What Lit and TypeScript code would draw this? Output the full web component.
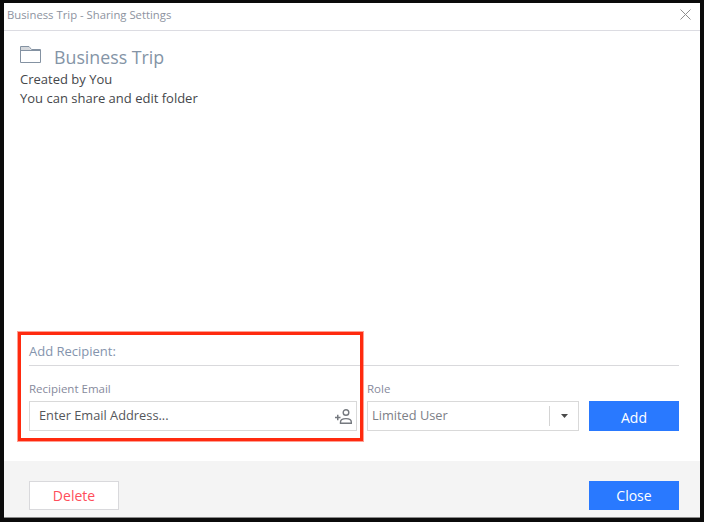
import { LitElement, html, css } from "lit";
import { customElement } from "lit/decorators.js";

@customElement("app-root")
export class AppRoot extends LitElement {
  static styles = css`
    :host {
      display: block;
      position: relative;
      width: 704px;
      height: 522px;
      box-sizing: border-box;
      background: #0b0b0b;
      padding: 3px 4px 4px 4px;
      font-family: "Open Sans", "Noto Sans", sans-serif;
      color: #4d4f53;
    }
    .win {
      height: 100%;
      display: flex;
      flex-direction: column;
      background: #fff;
      border-bottom: 1px solid #8a8a8a;
      box-sizing: border-box;
    }
    .titlebar {
      height: 28px;
      flex: none;
      box-sizing: border-box;
      border-bottom: 1px solid #dcdce2;
      display: flex;
      align-items: center;
      justify-content: space-between;
      padding: 0 9px 5px 3px;
      font-size: 11.3px;
      color: #8d93a0;
    }
    .close { display: block; }
    .body {
      flex: 1;
      display: flex;
      flex-direction: column;
      padding: 12px 21px 30px 16px;
      min-height: 0;
    }
    .head {
      display: flex;
      align-items: center;
      gap: 13px;
      height: 27px;
      font-size: 17.8px;
      color: #8494a6;
    }
    .head svg { margin-bottom: 4px; }
    .info { font-size: 13px; line-height: 19px; color: #45474b; }
    .spacer { flex: 1; }
    .section {
      margin-left: 9px;
      height: 30px;
      box-sizing: border-box;
      padding-top: 1px;
      border-bottom: 1px solid #d9d9dc;
      font-size: 13px;
      color: #8494ad;
      line-height: 28px;
    }
    .row {
      margin-left: 9px;
      margin-top: 15px;
      display: flex;
      align-items: flex-end;
    }
    .field label {
      display: block;
      font-size: 11.5px;
      color: #878a9c;
      line-height: 16px;
      margin-bottom: 4px;
    }
    .role-label { margin-left: 10px; }
    .box {
      box-sizing: border-box;
      height: 30px;
      border: 1px solid #d9d9d9;
      display: flex;
      align-items: center;
      font-size: 12.8px;
    }
    .text { padding-bottom: 2px; }
    .email { width: 328px; padding: 0 4px 0 9px; justify-content: space-between; color: #55575b; }
    .role { width: 212px; margin-left: 10px; padding-left: 4px; color: #7d8087; }
    .role .text { flex: 1; }
    .caret {
      width: 28px;
      height: 20px;
      border-left: 1px solid #d4d4d4;
      display: flex;
      align-items: center;
      justify-content: center;
    }
    .btn {
      box-sizing: border-box;
      width: 90px;
      height: 30px;
      display: flex;
      align-items: center;
      justify-content: center;
      font-size: 14px;
      background: #2979ff;
      color: #fff;
    }
    .add { margin-left: 10px; padding-top: 2px; }
    .footer {
      flex: none;
      height: 56px;
      box-sizing: border-box;
      background: #f4f4f4;
      display: flex;
      justify-content: space-between;
      padding: 20px 21px 0 25px;
    }
    .footer .btn { height: 29px; }
    .delete { background: #fff; border: 1px solid #d9d9dc; color: #ff4d5a; }
    .annot {
      position: absolute;
      left: 18px;
      top: 332px;
      width: 345px;
      height: 109px;
      box-sizing: border-box;
      border: 3px solid #ff2a0f;
      box-shadow: 0 0 0 1px rgba(255, 42, 15, 0.45);
      pointer-events: none;
    }
  `;

  render() {
    return html`
      <div class="win">
        <div class="titlebar">
          <span>Business Trip - Sharing Settings</span>
          <svg class="close" width="11" height="11" viewBox="0 0 11 11">
            <path d="M.5.5l10 10M10.500.5l-10 10" stroke="#8f8f8f" stroke-width="1" fill="none" />
          </svg>
        </div>
        <div class="body">
          <div class="head">
            <svg width="21" height="17" viewBox="0 0 21 17">
              <path d="M.5 16.500V.5h8.500l2.500 3h9v13z" fill="#fff" stroke="#8492a2" stroke-width="1" />
              <path d="M1 1h7.800l2.200 3H1z" fill="#d5d8dc" />
              <path d="M.5 4.500h20" stroke="#8492a2" stroke-width="1" />
            </svg>
            <span>Business Trip</span>
          </div>
          <div class="info">Created by You<br />You can share and edit folder</div>
          <div class="spacer"></div>
          <div class="section">Add Recipient:</div>
          <div class="row">
            <div class="field">
              <label>Recipient Email</label>
              <div class="box email">
                <span class="text">Enter Email Address...</span>
                <svg width="17" height="15" viewBox="0 0 17 15" fill="none" stroke="#75797f">
                  <path d="M0 8.500h5.500M2.750 5.700v5.600" stroke-width="1.500" />
                  <circle cx="11" cy="3.500" r="2.800" stroke-width="1.400" />
                  <path d="M5.500 14.300v-1.300c0-2.400 2.300-3.400 5.500-3.400s5.300 1 5.300 3.400v1.300z" stroke-width="1.400" />
                </svg>
              </div>
            </div>
            <div class="field">
              <label class="role-label">Role</label>
              <div class="box role">
                <span class="text">Limited User</span>
                <span class="caret">
                  <svg width="7" height="4" viewBox="0 0 7 4"><path d="M0 0h7L3.500 4z" fill="#4a4a4a" /></svg>
                </span>
              </div>
            </div>
            <div class="btn add">Add</div>
          </div>
        </div>
        <div class="footer">
          <div class="btn delete">Delete</div>
          <div class="btn">Close</div>
        </div>
      </div>
      <div class="annot"></div>
    `;
  }
}
